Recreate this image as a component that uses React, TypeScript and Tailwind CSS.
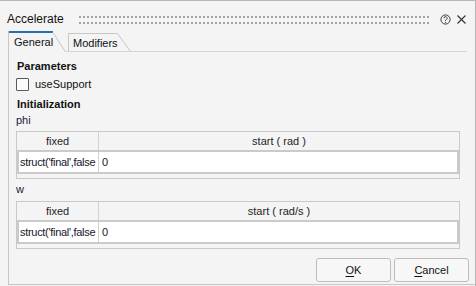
import React from "react";

function Grip() {
  return (
    <svg width="350" height="10" className="ml-auto mt-[14px] shrink-0" viewBox="0 0 350 10">
      <defs>
        <pattern id="grip" x="0" y="0" width="4" height="6" patternUnits="userSpaceOnUse">
          <rect x="0" y="1" width="2" height="2" fill="#a3a3a3" />
        </pattern>
      </defs>
      <rect x="0" y="0" width="350" height="9" fill="url(#grip)" />
    </svg>
  );
}

function HelpIcon() {
  return (
    <svg width="11" height="11" viewBox="0 0 11 11" className="ml-[11px] mt-[13px] shrink-0">
      <circle cx="5.5" cy="5.5" r="4.6" fill="none" stroke="#3a3a3a" strokeWidth="1" />
      <path d="M3.9 4.3 A1.6 1.6 0 1 1 6.3 5.6 C5.7 5.9 5.5 6.2 5.5 6.9" fill="none" stroke="#3a3a3a" strokeWidth="1" />
      <circle cx="5.5" cy="8.3" r="0.65" fill="#3a3a3a" />
    </svg>
  );
}

function CloseIcon() {
  return (
    <svg width="9" height="9" viewBox="0 0 9 9" className="ml-[6px] mr-[9px] mt-[14px] shrink-0">
      <path d="M0.5 0.5 L8.5 8.5 M8.5 0.5 L0.5 8.5" stroke="#333" strokeWidth="1.1" />
    </svg>
  );
}

function ParamTable({ unit }: { unit: string }) {
  return (
    <div className="ml-[7px] w-[444px] h-[48px] border border-[#c9c9c9] flex flex-col shrink-0">
      <div className="h-[18px] flex text-[#1e1e1e] leading-[18px]">
        <div className="w-[82px] border-r border-[#d2d2d2] text-center">fixed</div>
        <div className="flex-1 text-center">start ( {unit} )</div>
      </div>
      <div className="h-[24px] border-2 border-[#cacaca] bg-white flex leading-[20px] text-[#15152a]">
        <div className="w-[80px] border-r border-[#d2d2d2] pl-[1px] whitespace-nowrap overflow-hidden tracking-[-0.3px]">
          struct('final',false
        </div>
        <div className="flex-1 pl-[3px]">0</div>
      </div>
    </div>
  );
}

export default function App() {
  return (
    <div className="w-[476px] h-[286px] bg-[#f4f4f4] border-t border-r border-[#b7b7b7] flex flex-col overflow-hidden text-[11px] text-black font-['Liberation_Sans',Arial,sans-serif]">
      {/* Title bar */}
      <div className="h-[30px] flex items-start shrink-0">
        <span className="ml-[7px] mt-[11px] text-[12px] leading-[14px] text-[#111]">Accelerate</span>
        <Grip />
        <HelpIcon />
        <CloseIcon />
      </div>

      {/* Tabs */}
      <div className="h-[21px] flex items-stretch pl-[8px] mr-[8px] shrink-0">
        <div className="relative w-[58px] h-[21px]">
          <svg width="58" height="21" viewBox="0 0 58 21" className="absolute inset-0">
            <path d="M0.5 0 L0.5 21" stroke="#c6c6c6" strokeWidth="1" />
            <rect x="1" y="0" width="44" height="2" fill="#2770ad" />
            <path d="M45 1.5 L57.5 21" stroke="#c6c6c6" strokeWidth="1" fill="none" />
          </svg>
          <span className="absolute left-[6px] top-[5px] leading-[13px] text-[#111]">General</span>
        </div>
        <div className="relative w-[65px] h-[21px]">
          <svg width="65" height="21" viewBox="0 0 65 21" className="absolute inset-0">
            <path d="M2.5 21 L2.5 2.5 L51.5 2.5 L64.5 20.5" stroke="#c6c6c6" strokeWidth="1" fill="none" />
            <path d="M0 20.5 L65 20.5" stroke="#d4d4d4" strokeWidth="1" />
          </svg>
          <span className="absolute left-[7px] top-[6px] leading-[13px] text-[#111]">Modifiers</span>
        </div>
        <div className="flex-1 border-b border-[#d4d4d4]" />
      </div>

      {/* Panel */}
      <div className="flex-1 ml-[8px] mb-[1px] border-l border-b border-[#c6c6c6] flex flex-col">
        <div className="mt-[8px] ml-[8px] font-bold leading-[13px] text-[#111]">Parameters</div>
        <div className="mt-[4px] ml-[7px] h-[15px] flex items-center">
          <div className="w-[13px] h-[13px] border border-[#5a5a5a] bg-[#fbfbfb] rounded-[1px]" />
          <span className="ml-[6px] leading-[15px] text-[#111]">useSupport</span>
        </div>
        <div className="mt-[6px] ml-[8px] font-bold leading-[13px] text-[#111]">Initialization</div>
        <div className="mt-[3px] ml-[7px] leading-[13px] text-[#1a1a3a]">phi</div>
        <div className="mt-[4px]">
          <ParamTable unit="rad" />
        </div>
        <div className="mt-[4px] ml-[7px] leading-[13px] text-[#1a1a3a]">w</div>
        <div className="mt-[5px]">
          <ParamTable unit="rad/s" />
        </div>
        <div className="mt-[9px] flex justify-end gap-[3px] pr-[6px]">
          <button className="w-[75px] h-[24px] border border-[#bdbdbd] bg-[#f7f7f7] rounded-[3px] text-[11px] text-[#111] leading-[22px]">
            <span className="underline underline-offset-2">O</span>K
          </button>
          <button className="w-[75px] h-[24px] border border-[#bdbdbd] bg-[#f7f7f7] rounded-[3px] text-[11px] text-[#111] leading-[22px]">
            <span className="underline underline-offset-2">C</span>ancel
          </button>
        </div>
      </div>
    </div>
  );
}
